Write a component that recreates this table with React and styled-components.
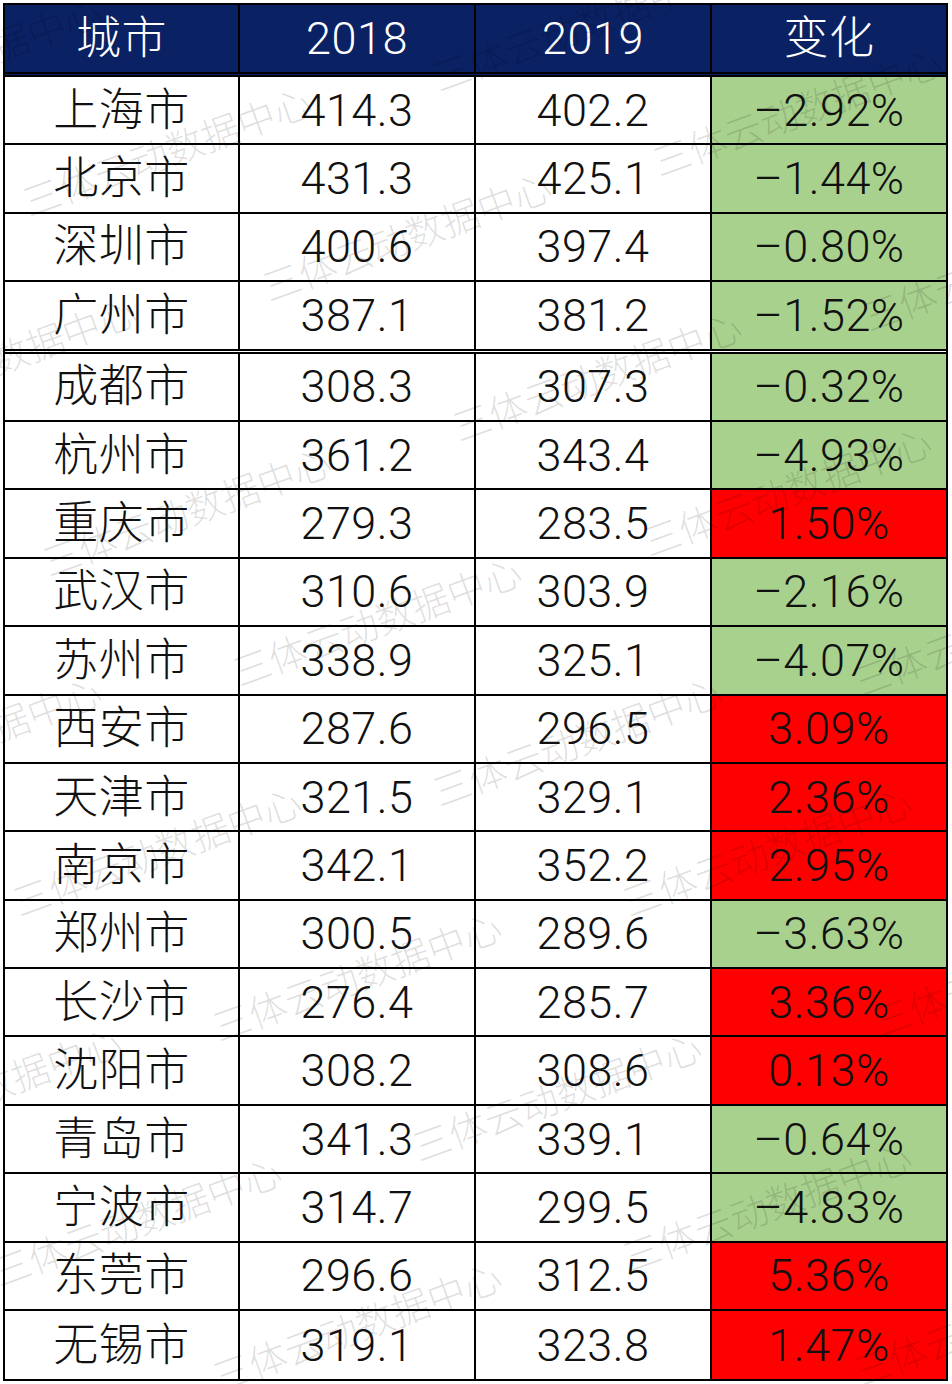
import React from "react";
import styled, { createGlobalStyle } from "styled-components";

const rows = [
  ["上海市", "414.3", "402.2", "–2.92%"],
  ["北京市", "431.3", "425.1", "–1.44%"],
  ["深圳市", "400.6", "397.4", "–0.80%"],
  ["广州市", "387.1", "381.2", "–1.52%"],
  ["成都市", "308.3", "307.3", "–0.32%"],
  ["杭州市", "361.2", "343.4", "–4.93%"],
  ["重庆市", "279.3", "283.5", "1.50%"],
  ["武汉市", "310.6", "303.9", "–2.16%"],
  ["苏州市", "338.9", "325.1", "–4.07%"],
  ["西安市", "287.6", "296.5", "3.09%"],
  ["天津市", "321.5", "329.1", "2.36%"],
  ["南京市", "342.1", "352.2", "2.95%"],
  ["郑州市", "300.5", "289.6", "–3.63%"],
  ["长沙市", "276.4", "285.7", "3.36%"],
  ["沈阳市", "308.2", "308.6", "0.13%"],
  ["青岛市", "341.3", "339.1", "–0.64%"],
  ["宁波市", "314.7", "299.5", "–4.83%"],
  ["东莞市", "296.6", "312.5", "5.36%"],
  ["无锡市", "319.1", "323.8", "1.47%"],
];

// watermark starting points (left end of the text baseline)
const marks = [
  [-180, 130], [440, 95],
  [30, 220], [660, 180],
  [270, 305], [870, 335],
  [-145, 430], [460, 445],
  [50, 580], [650, 560],
  [240, 690], [860, 700],
  [-180, 810], [440, 810],
  [20, 920], [630, 920],
  [220, 1045], [880, 1040],
  [-160, 1160], [420, 1165],
  [0, 1290], [630, 1275],
  [220, 1395], [860, 1390],
];

const GlobalStyle = createGlobalStyle`
  body {
    margin: 0;
    background: #ffffff;
    font-family: "Roboto", "Noto Sans CJK SC", sans-serif;
  }
`;

const Page = styled.div`
  position: relative;
  width: 952px;
  height: 1384px;
  padding: 3px 0 0 3px;
  box-sizing: border-box;
  overflow: hidden;
`;

const Table = styled.div`
  width: 945px;
  border: 2px solid #000;
  box-sizing: border-box;
`;

const Row = styled.div`
  display: grid;
  grid-template-columns: 235px 236px 236px 234px;
  height: ${(p) => (p.head ? "72px" : p.double ? "71.4px" : "68.4px")};
  border-bottom: ${(p) =>
    p.last ? "none" : p.head || p.double ? "5px double #000" : "2px solid #000"};
  background: ${(p) => (p.head ? "#0a2163" : "#fff")};
  box-sizing: border-box;
`;

const Cell = styled.div`
  display: flex;
  align-items: center;
  justify-content: center;
  border-right: ${(p) => (p.end ? "none" : "2px solid #000")};
  background: ${(p) =>
    p.tone === "down" ? "#a9d18e" : p.tone === "up" ? "#ff0000" : "transparent"};
  color: ${(p) => (p.head ? "#ffffff" : "#111111")};
  font-family: "Roboto", "Noto Sans CJK SC", sans-serif;
  font-weight: 300;
  font-size: 45px;
  line-height: 1;
  letter-spacing: 0.5px;
`;

const Mark = styled.div`
  position: absolute;
  transform: rotate(-20deg);
  transform-origin: 0 100%;
  white-space: nowrap;
  font-family: "Noto Sans CJK SC", sans-serif;
  font-weight: 300;
  font-size: 38px;
  line-height: 1;
  color: rgba(0, 0, 0, 0.13);
  pointer-events: none;
`;

export default function App() {
  return (
    <Page>
      <GlobalStyle />
      <Table>
        <Row head>
          <Cell head>城市</Cell>
          <Cell head>2018</Cell>
          <Cell head>2019</Cell>
          <Cell head end>变化</Cell>
        </Row>
        {rows.map(([city, a, b, change], i) => (
          <Row key={city} double={i === 3} last={i === rows.length - 1}>
            <Cell>{city}</Cell>
            <Cell>{a}</Cell>
            <Cell>{b}</Cell>
            <Cell end tone={change.startsWith("–") ? "down" : "up"}>
              {change}
            </Cell>
          </Row>
        ))}
      </Table>
      {marks.map(([x, y], i) => (
        <Mark key={i} style={{ left: x, top: y - 38 }}>
          三体云动数据中心
        </Mark>
      ))}
    </Page>
  );
}
